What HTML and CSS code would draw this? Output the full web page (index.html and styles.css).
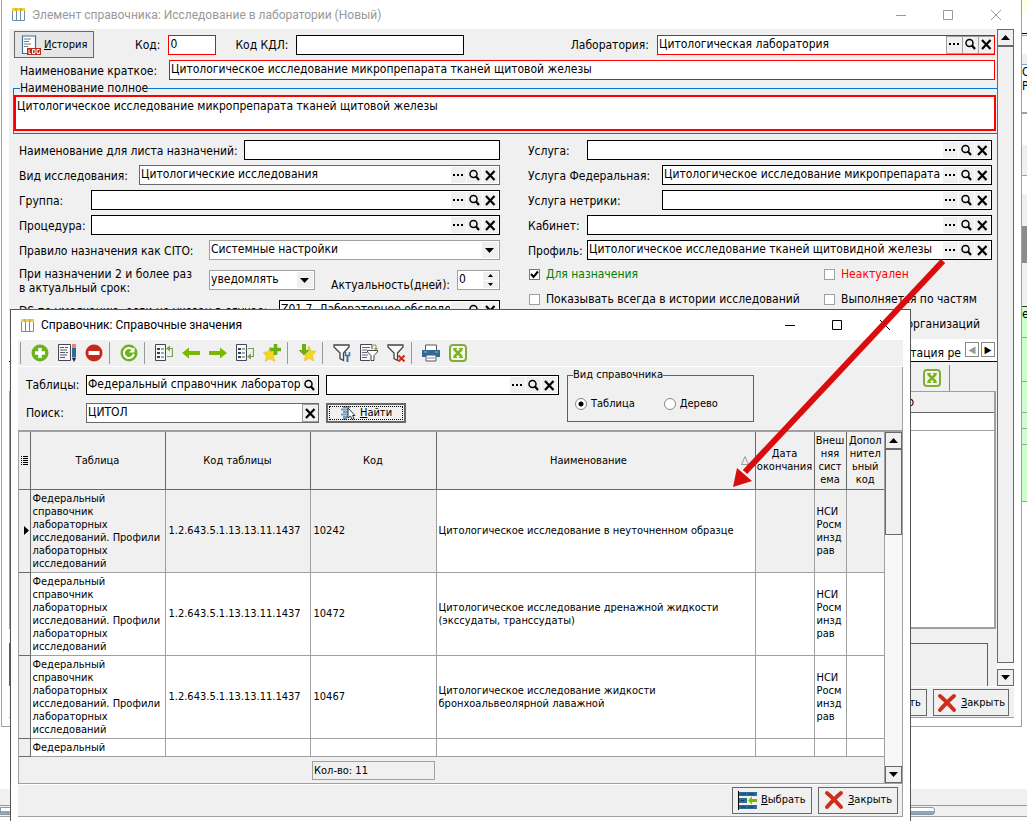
FILE: index.html
```html
<!DOCTYPE html>
<html lang="ru">
<head>
    <meta charset="UTF-8">
    <meta name="viewport" content="width=device-width, initial-scale=1.0">
    <title>Элемент справочника: Исследование в лаборатории</title>
    <link rel="stylesheet" href="styles.css">
</head>
<body>
    <!-- icon set -->
    <svg class="sprite" aria-hidden="true">
        <symbol id="i-grid" viewBox="0 0 13 13">
            <path d="M0 0h13v3H0z" fill="#f0d040"/>
            <path d="M0.5 3v9.5h12V3M4.5 3v9.5M8.5 3v9.5" fill="none" stroke="#6f8ea6"/>
            <path d="M4 0v3M9 0v3" stroke="#b5973a"/>
        </symbol>
        <symbol id="i-dots" viewBox="0 0 13 13"><path d="M1 5h2v2H1zM5 5h2v2H5zM9 5h2v2H9z"/></symbol>
        <symbol id="i-lens" viewBox="0 0 13 13"><circle cx="5.5" cy="5" r="3.5" fill="none" stroke="#000" stroke-width="1.5"/><path d="M8 7.5l3 3.5" stroke="#000" stroke-width="2.2"/></symbol>
        <symbol id="i-x" viewBox="0 0 13 13"><path d="M2 2l8.500 9M10.500 2L2 11" stroke="#000" stroke-width="2.2"/></symbol>
        <symbol id="i-up" viewBox="0 0 9 5"><path d="M0 5L4.500 0L9 5z"/></symbol>
        <symbol id="i-down" viewBox="0 0 9 5"><path d="M0 0L4.500 5L9 0z"/></symbol>
        <symbol id="i-log" viewBox="0 0 20 20">
            <path d="M1.500 1H14.500V18.500H1.500z" fill="#fff" stroke="#3a719c" stroke-width="1.2"/>
            <path d="M3 4h7M3 6.500h5M3 9h7M3 11.500h4" stroke="#777"/>
            <path d="M6 13h14v7H6z" fill="#b5301c"/>
            <path d="M8 14.500v4h2M11.500 14.500h2.500v4h-2.500zM18.500 14.500h-2.500v4h2.500v-2" fill="none" stroke="#fff"/>
        </symbol>
        <symbol id="i-close" viewBox="0 0 20 20"><path d="M3 3Q8 7 17 17M17 3Q11 8 3 17" fill="none" stroke="#cf2e1c" stroke-width="4" stroke-linecap="round"/></symbol>
        <symbol id="i-pick" viewBox="0 0 19 19">
            <path d="M1 1h18v4H1zM1 7h8v5H1zM1 14h18v4H1z" fill="#2e6b96"/>
            <path d="M0.500 0v19" stroke="#000"/>
            <path d="M3 3h5M10 3h6M3 9.500h3M3 16h5M10 16h6" stroke="#143c58"/>
            <path d="M10 9.500l4-4v2.500h5v3h-5v2.500z" fill="#7ab800"/>
        </symbol>
        <symbol id="i-find" viewBox="0 0 16 14">
            <path d="M3 1h7M1 3.500h8M3 6h5M1 8.500h7M3 11h5M3 13h4" stroke="#6f9cbd" stroke-width="2"/>
            <path d="M8 2v10l2.500-2 1.500 3.500 2-1-1.500-3H15z" fill="#fff" stroke="#333"/>
        </symbol>
        <symbol id="i-add" viewBox="0 0 18 18"><circle cx="9" cy="9" r="8.500" fill="#6db320"/><path d="M9 4v10M4 9h10" stroke="#fff" stroke-width="3.500"/></symbol>
        <symbol id="i-edit" viewBox="0 0 18 18">
            <path d="M0.500 0.500h12v16H0.500z" fill="#f8f8f8" stroke="#445"/>
            <path d="M2 3.500h4M7 3.500h3M2 6h7M2 8.500h5M8 8.500h2M2 11h7M2 13.500h5" stroke="#556"/>
            <path d="M14 0h4v3h-4z" fill="#e8837c"/><path d="M14 3.500h4v10h-4z" fill="#2e6b96"/><path d="M14 14h4l-2 4z" fill="#222"/>
        </symbol>
        <symbol id="i-remove" viewBox="0 0 18 18"><circle cx="9" cy="9" r="8.500" fill="#c8281c"/><path d="M3.500 9h11" stroke="#fff" stroke-width="4"/></symbol>
        <symbol id="i-refresh" viewBox="0 0 18 18"><circle cx="9" cy="9" r="8.500" fill="#6db320"/><path d="M12.500 5.500A5 5 0 1 0 13.800 10" fill="none" stroke="#fff" stroke-width="2"/><path d="M14.500 3v5.500H9z" fill="#fff"/></symbol>
        <symbol id="i-tree-up" viewBox="0 0 18 18">
            <path d="M0.500 0.500h10v16H0.500z" fill="#f8f8f8" stroke="#445"/>
            <path d="M2 4h3v2H2zM2 8h3v2H2zM2 12h3v2H2z" fill="#345"/><path d="M6 5h3M6 9h3M6 13h3" stroke="#556"/>
            <path d="M12 12.500h5.500v-8H14" fill="none" stroke="#7aa050" stroke-width="1.200"/><path d="M15 1.500v6l-4-3z" fill="#7aa050"/>
        </symbol>
        <symbol id="i-tree-down" viewBox="0 0 18 18">
            <path d="M0.500 0.500h10v16H0.500z" fill="#f8f8f8" stroke="#445"/>
            <path d="M2 4h3v2H2zM2 8h3v2H2zM2 12h3v2H2z" fill="#345"/><path d="M6 5h3M6 9h3M6 13h3" stroke="#556"/>
            <path d="M12 4.500h5.500v8H14" fill="none" stroke="#7aa050" stroke-width="1.200"/><path d="M15 9.500v6l-4-3z" fill="#7aa050"/>
        </symbol>
        <symbol id="i-left" viewBox="0 0 18 18"><path d="M0 9l7-5.500V7h11v4H7v3.500z" fill="#7ab800"/></symbol>
        <symbol id="i-right" viewBox="0 0 18 18"><path d="M18 9l-7-5.500V7H0v4h11v3.500z" fill="#7ab800"/></symbol>
        <symbol id="i-star-add" viewBox="0 0 18 18"><path d="M7 3l2.200 4.800 5.300.6-3.900 3.600 1 5.500L7 14.800 2.300 17.500l1-5.500L0 8.400l4.800-.6z" fill="#f6d327" stroke="#eebb2a" stroke-width=".6"/><path d="M12.500 0v11M7 5.500h11" stroke="#6fae12" stroke-width="3.600"/></symbol>
        <symbol id="i-star-down" viewBox="0 0 18 18"><path d="M11 2l2.200 4.800 4.800.6-3.500 3.600 1 6L11 14.300 6.300 17l1-5.500L3.500 7.400l5.300-.6z" fill="#f6d327" stroke="#eebb2a" stroke-width=".6"/><path d="M4 0h4v6h3.500L6 11.500.5 6H4z" fill="#6fae12"/></symbol>
        <symbol id="i-filter" viewBox="0 0 18 18"><path d="M1 1h15v2l-5.500 6v7.500L7 14.500V9L1 3z" fill="#f8f8f8" stroke="#444" stroke-width="1.300"/><path d="M14.500 11v7" stroke="#3a719c" stroke-width="2"/><path d="M12.500 8v3.500h4V8" fill="none" stroke="#3a719c" stroke-width="1.500"/></symbol>
        <symbol id="i-filter-list" viewBox="0 0 18 18"><path d="M12 5V.5H.5v16H10" fill="#f8f8f8" stroke="#445"/><path d="M2 3.500h8M2 6h5M2 8.500h5M2 11h6M2 13.500h5" stroke="#667"/><path d="M7.500 6.500h10v1.500L14 11.500v5h-3v-5L7.500 8z" fill="#fff" stroke="#444"/><path d="M13 1h3v4" fill="none" stroke="#7aa050"/><path d="M14 4h4l-2 2.500z" fill="#7aa050"/></symbol>
        <symbol id="i-filter-off" viewBox="0 0 18 18"><path d="M1 1h15v2l-5.500 6v7.500L7 14.500V9L1 3z" fill="#f8f8f8" stroke="#444" stroke-width="1.300"/><path d="M11.500 11.500l6 6M17.500 11.500l-6 6" stroke="#cf2e1c" stroke-width="2"/></symbol>
        <symbol id="i-print" viewBox="0 0 18 18"><path d="M3.500 1h11v6h-11z" fill="#fff" stroke="#556"/><path d="M0 6h18v7H0z" fill="#2e6b96"/><path d="M2 8h3M13 8h3" stroke="#8ab8d8"/><path d="M4 11h10v6H4z" fill="#fff" stroke="#556"/><path d="M5 14h8" stroke="#889"/></symbol>
        <symbol id="i-excel" viewBox="0 0 18 18"><rect x="1" y="1" width="16" height="16" rx="3" fill="#f4f8ea" stroke="#86ab3c" stroke-width="2"/><path d="M5 5l8 8M13 5l-8 8" stroke="#7ab51d" stroke-width="2.500"/><path d="M4 4.500h4M10 4.500h4M4 13.500h4M10 13.500h4" stroke="#86ab3c"/></symbol>
    </svg>

    <div class="desktop">
        <!-- application behind the dialogs -->
        <div class="backdrop">
            <div class="edge">
                <div class="edge-top"></div>
                <div class="edge-cell"></div>
                <div class="edge-bar"></div>
                <div class="edge-text">О<br>Р</div>
                <div class="edge-gap"></div>
                <div class="edge-scroll"></div>
                <div class="edge-thumb"></div>
                <div class="edge-scroll short"></div>
                <div class="edge-green">е</div>
                <div class="edge-green tall"></div>
                <div class="edge-green"></div>
                <div class="edge-green thin"></div>
                <div class="edge-green thin"></div>
                <div class="edge-green high"></div>
            </div>
            <div class="hscroll"><div class="hthumb"></div></div>
        </div>

        <section class="window window-main">
            <header class="titlebar">
                <svg class="ico-title"><use href="#i-grid"/></svg>
                <h1>Элемент справочника: Исследование в лаборатории (Новый)</h1>
                <svg class="caption" viewBox="0 0 106 12"><path d="M0 6.500h10M47.500 1.500h9v9h-9zM95 1l10 10M105 1l-10 10" fill="none" stroke="#999"/></svg>
            </header>
            <div class="client">
                <div class="scroll-area">
                    <form class="card">
                        <div class="row row-top">
                            <button type="button" class="btn btn-log"><svg class="ico20"><use href="#i-log"/></svg><span><u>И</u>стория</span></button>
                            <label for="code">Код:</label>
                            <input id="code" class="field red f-code" type="text" value="0">
                            <label for="kdl">Код КДЛ:</label>
                            <input id="kdl" class="field f-kdl" type="text">
                            <label for="lab" class="push">Лаборатория:</label>
                            <div class="lookup red boxed f-lab">
                                <input id="lab" type="text" value="Цитологическая лаборатория">
                                <button type="button" aria-label="Выбрать"><svg><use href="#i-dots"/></svg></button>
                                <button type="button" aria-label="Найти"><svg><use href="#i-lens"/></svg></button>
                                <button type="button" aria-label="Очистить"><svg><use href="#i-x"/></svg></button>
                            </div>
                        </div>
                        <div class="row row-short">
                            <label for="short">Наименование краткое:</label>
                            <input id="short" class="field red grow" type="text" value="Цитологическое исследование микропрепарата тканей щитовой железы">
                        </div>
                        <fieldset class="full-name">
                            <legend><label for="full">Наименование полное</label></legend>
                            <textarea id="full">Цитологическое исследование микропрепарата тканей щитовой железы</textarea>
                        </fieldset>

                        <div class="columns">
                            <div class="col">
                                <div class="row">
                                    <label for="sheet" class="l-225">Наименование для листа назначений:</label>
                                    <input id="sheet" class="field grow" type="text">
                                </div>
                                <div class="row">
                                    <label for="kind" class="l-120">Вид исследования:</label>
                                    <div class="lookup gray">
                                        <input id="kind" type="text" value="Цитологические исследования">
                                        <button type="button" aria-label="Выбрать"><svg><use href="#i-dots"/></svg></button>
                                        <button type="button" aria-label="Найти"><svg><use href="#i-lens"/></svg></button>
                                        <button type="button" aria-label="Очистить"><svg><use href="#i-x"/></svg></button>
                                    </div>
                                </div>
                                <div class="row">
                                    <label for="group" class="l-72">Группа:</label>
                                    <div class="lookup">
                                        <input id="group" type="text">
                                        <button type="button" aria-label="Выбрать"><svg><use href="#i-dots"/></svg></button>
                                        <button type="button" aria-label="Найти"><svg><use href="#i-lens"/></svg></button>
                                        <button type="button" aria-label="Очистить"><svg><use href="#i-x"/></svg></button>
                                    </div>
                                </div>
                                <div class="row">
                                    <label for="proc" class="l-72">Процедура:</label>
                                    <div class="lookup">
                                        <input id="proc" type="text">
                                        <button type="button" aria-label="Выбрать"><svg><use href="#i-dots"/></svg></button>
                                        <button type="button" aria-label="Найти"><svg><use href="#i-lens"/></svg></button>
                                        <button type="button" aria-label="Очистить"><svg><use href="#i-x"/></svg></button>
                                    </div>
                                </div>
                                <div class="row">
                                    <label for="cito" class="l-190">Правило назначения как CITO:</label>
                                    <select id="cito" class="select grow"><option>Системные настройки</option></select>
                                </div>
                                <div class="row row-tall">
                                    <label for="notify" class="l-190">При назначении 2 и более раз<br>в актуальный срок:</label>
                                    <select id="notify" class="select f-notify"><option>уведомлять</option></select>
                                    <label for="days" class="push">Актуальность(дней):</label>
                                    <div class="spin">
                                        <input id="days" type="text" value="0">
                                        <div class="spin-btns">
                                            <button type="button" aria-label="Больше"><svg><use href="#i-up"/></svg></button>
                                            <button type="button" aria-label="Меньше"><svg><use href="#i-down"/></svg></button>
                                        </div>
                                    </div>
                                </div>
                                <div class="row">
                                    <label for="ds" class="l-260">DS по умолчанию, если не указан в случае:</label>
                                    <div class="lookup">
                                        <input id="ds" type="text" value="Z01.7, Лабораторное обследование">
                                        <button type="button" aria-label="Выбрать"></button>
                                        <button type="button" aria-label="Найти"><svg><use href="#i-lens"/></svg></button>
                                        <button type="button" aria-label="Очистить"><svg><use href="#i-x"/></svg></button>
                                    </div>
                                </div>
                            </div>
                            <div class="col">
                                <div class="row">
                                    <label for="service" class="l-59">Услуга:</label>
                                    <div class="lookup">
                                        <input id="service" type="text">
                                        <button type="button" aria-label="Выбрать"><svg><use href="#i-dots"/></svg></button>
                                        <button type="button" aria-label="Найти"><svg><use href="#i-lens"/></svg></button>
                                        <button type="button" aria-label="Очистить"><svg><use href="#i-x"/></svg></button>
                                    </div>
                                </div>
                                <div class="row">
                                    <label for="fed" class="l-134">Услуга Федеральная:</label>
                                    <div class="lookup">
                                        <input id="fed" type="text" value="Цитологическое исследование микропрепарата тканей">
                                        <button type="button" aria-label="Выбрать"><svg><use href="#i-dots"/></svg></button>
                                        <button type="button" aria-label="Найти"><svg><use href="#i-lens"/></svg></button>
                                        <button type="button" aria-label="Очистить"><svg><use href="#i-x"/></svg></button>
                                    </div>
                                </div>
                                <div class="row">
                                    <label for="netrika" class="l-134">Услуга нетрики:</label>
                                    <div class="lookup">
                                        <input id="netrika" type="text">
                                        <button type="button" aria-label="Выбрать"><svg><use href="#i-dots"/></svg></button>
                                        <button type="button" aria-label="Найти"><svg><use href="#i-lens"/></svg></button>
                                        <button type="button" aria-label="Очистить"><svg><use href="#i-x"/></svg></button>
                                    </div>
                                </div>
                                <div class="row">
                                    <label for="room" class="l-59">Кабинет:</label>
                                    <div class="lookup">
                                        <input id="room" type="text">
                                        <button type="button" aria-label="Выбрать"><svg><use href="#i-dots"/></svg></button>
                                        <button type="button" aria-label="Найти"><svg><use href="#i-lens"/></svg></button>
                                        <button type="button" aria-label="Очистить"><svg><use href="#i-x"/></svg></button>
                                    </div>
                                </div>
                                <div class="row">
                                    <label for="profile" class="l-59">Профиль:</label>
                                    <div class="lookup">
                                        <input id="profile" type="text" value="Цитологическое исследование тканей щитовидной железы">
                                        <button type="button" aria-label="Выбрать"><svg><use href="#i-dots"/></svg></button>
                                        <button type="button" aria-label="Найти"><svg><use href="#i-lens"/></svg></button>
                                        <button type="button" aria-label="Очистить"><svg><use href="#i-x"/></svg></button>
                                    </div>
                                </div>
                                <div class="checks">
                                    <label class="check green"><input type="checkbox" checked>Для назначения</label>
                                    <label class="check redtext"><input type="checkbox">Неактуален</label>
                                    <label class="check"><input type="checkbox">Показывать всегда в истории исследований</label>
                                    <label class="check"><input type="checkbox">Выполняется по частям</label>
                                    <span class="org">организаций</span>
                                </div>
                            </div>
                        </div>

                        <div class="tabs">
                            <span class="tab">тация ре</span>
                            <button type="button" class="tab-nav off" aria-label="Назад">◀</button>
                            <button type="button" class="tab-nav" aria-label="Вперёд">▶</button>
                        </div>
                        <div class="sub-toolbar"><svg class="ico18"><use href="#i-excel"/></svg></div>
                        <div class="sub-grid">
                            <div class="sub-head">о</div>
                            <div class="sub-row"></div>
                        </div>
                        <div class="sub-group"></div>
                    </form>
                    <div class="vscroll">
                        <button type="button" class="sb-btn" aria-label="Вверх"><svg><use href="#i-up"/></svg></button>
                        <div class="sb-thumb main-thumb"></div>
                        <button type="button" class="sb-btn" aria-label="Вниз"><svg><use href="#i-down"/></svg></button>
                    </div>
                </div>
                <footer class="actions">
                    <button type="button" class="btn btn-save">Сохранить</button>
                    <button type="button" class="btn"><svg class="ico20"><use href="#i-close"/></svg><span><u>З</u>акрыть</span></button>
                </footer>
            </div>
        </section>

        <section class="window window-ref">
            <header class="titlebar active">
                <svg class="ico-title"><use href="#i-grid"/></svg>
                <h2>Справочник: Справочные значения</h2>
                <svg class="caption" viewBox="0 0 106 12"><path d="M0 6.500h10M47.500 1.500h9v9h-9zM95 1l10 10M105 1l-10 10" fill="none" stroke="#000"/></svg>
            </header>
            <div class="toolbar">
                <i class="sep"></i>
                <button type="button" aria-label="Добавить"><svg class="ico18"><use href="#i-add"/></svg></button>
                <button type="button" aria-label="Изменить"><svg class="ico18"><use href="#i-edit"/></svg></button>
                <button type="button" aria-label="Удалить"><svg class="ico18"><use href="#i-remove"/></svg></button>
                <i class="sep"></i>
                <button type="button" aria-label="Обновить"><svg class="ico18"><use href="#i-refresh"/></svg></button>
                <i class="sep"></i>
                <button type="button" aria-label="Первая"><svg class="ico18"><use href="#i-tree-up"/></svg></button>
                <button type="button" aria-label="Назад"><svg class="ico18"><use href="#i-left"/></svg></button>
                <button type="button" aria-label="Вперёд"><svg class="ico18"><use href="#i-right"/></svg></button>
                <button type="button" aria-label="Последняя"><svg class="ico18"><use href="#i-tree-down"/></svg></button>
                <button type="button" aria-label="В избранное"><svg class="ico18"><use href="#i-star-add"/></svg></button>
                <i class="sep"></i>
                <button type="button" aria-label="Избранное"><svg class="ico18"><use href="#i-star-down"/></svg></button>
                <i class="sep"></i>
                <button type="button" aria-label="Фильтр"><svg class="ico18"><use href="#i-filter"/></svg></button>
                <button type="button" aria-label="Список фильтров"><svg class="ico18"><use href="#i-filter-list"/></svg></button>
                <button type="button" aria-label="Снять фильтр"><svg class="ico18"><use href="#i-filter-off"/></svg></button>
                <i class="sep"></i>
                <button type="button" aria-label="Печать"><svg class="ico18"><use href="#i-print"/></svg></button>
                <button type="button" aria-label="Excel"><svg class="ico18"><use href="#i-excel"/></svg></button>
            </div>

            <div class="panel">
                <div class="search">
                    <div class="search-fields">
                        <label for="tables">Таблицы:</label>
                        <div class="lookup">
                            <input id="tables" type="text" value="Федеральный справочник лабораторных">
                            <button type="button" aria-label="Найти"><svg><use href="#i-lens"/></svg></button>
                        </div>
                        <div class="lookup">
                            <input type="text" aria-label="Значение">
                            <button type="button" aria-label="Выбрать"><svg><use href="#i-dots"/></svg></button>
                            <button type="button" aria-label="Найти"><svg><use href="#i-lens"/></svg></button>
                            <button type="button" aria-label="Очистить"><svg><use href="#i-x"/></svg></button>
                        </div>
                        <label for="query">Поиск:</label>
                        <div class="lookup gray boxed">
                            <input id="query" type="text" value="ЦИТОЛ">
                            <button type="button" aria-label="Очистить"><svg><use href="#i-x"/></svg></button>
                        </div>
                        <button type="button" class="btn btn-find"><svg class="ico-find"><use href="#i-find"/></svg><span><u>Н</u>айти</span></button>
                    </div>
                    <fieldset class="view">
                        <legend>Вид справочника</legend>
                        <label class="radio"><input type="radio" name="view" checked>Таблица</label>
                        <label class="radio"><input type="radio" name="view">Дерево</label>
                    </fieldset>
                </div>

                <div class="grid-box">
                    <div class="grid-main">
                        <div class="grid-view">
                            <table class="grid">
                                <colgroup><col class="c-mark"><col class="c-table"><col class="c-oid"><col class="c-code"><col><col class="c-date"><col class="c-ext"><col class="c-add"></colgroup>
                                <thead>
                                    <tr>
                                        <th><svg class="ico-list" viewBox="0 0 7 9"><path d="M0 .5h1M2 .5h5M0 2.500h1M2 2.500h5M0 4.500h1M2 4.500h5M0 6.500h1M2 6.500h5M0 8.500h1M2 8.500h5" stroke="#000"/></svg></th>
                                        <th>Таблица</th>
                                        <th>Код таблицы</th>
                                        <th>Код</th>
                                        <th><div class="sorted"><span>Наименование</span><svg class="ico-sort" viewBox="0 0 8 9"><path d="M4 .5L7.500 8.500H.5z" fill="none" stroke="#999"/></svg></div></th>
                                        <th>Дата<br>окончания</th>
                                        <th>Внеш<br>няя<br>сист<br>ема</th>
                                        <th>Допол<br>нител<br>ьный<br>код</th>
                                    </tr>
                                </thead>
                                <tbody>
                                    <tr class="current">
                                        <td><svg class="ico-mark" viewBox="0 0 5 9"><path d="M0 0l5 4.500L0 9z"/></svg></td>
                                        <td>Федеральный<br>справочник<br>лабораторных<br>исследований. Профили<br>лабораторных<br>исследований</td>
                                        <td>1.2.643.5.1.13.13.11.1437</td>
                                        <td>10242</td>
                                        <td class="name">Цитологическое исследование в неуточненном образце</td>
                                        <td></td>
                                        <td>НСИ<br>Росм<br>инзд<br>рав</td>
                                        <td></td>
                                    </tr>
                                    <tr>
                                        <td></td>
                                        <td>Федеральный<br>справочник<br>лабораторных<br>исследований. Профили<br>лабораторных<br>исследований</td>
                                        <td>1.2.643.5.1.13.13.11.1437</td>
                                        <td>10472</td>
                                        <td>Цитологическое исследование дренажной жидкости<br>(экссудаты, транссудаты)</td>
                                        <td></td>
                                        <td>НСИ<br>Росм<br>инзд<br>рав</td>
                                        <td></td>
                                    </tr>
                                    <tr>
                                        <td></td>
                                        <td>Федеральный<br>справочник<br>лабораторных<br>исследований. Профили<br>лабораторных<br>исследований</td>
                                        <td>1.2.643.5.1.13.13.11.1437</td>
                                        <td>10467</td>
                                        <td>Цитологическое исследование жидкости<br>бронхоальвеолярной лаважной</td>
                                        <td></td>
                                        <td>НСИ<br>Росм<br>инзд<br>рав</td>
                                        <td></td>
                                    </tr>
                                    <tr class="last">
                                        <td></td>
                                        <td>Федеральный</td>
                                        <td></td>
                                        <td></td>
                                        <td></td>
                                        <td></td>
                                        <td></td>
                                        <td></td>
                                    </tr>
                                </tbody>
                            </table>
                        </div>
                        <div class="grid-foot"><span class="count">Кол-во: 11</span></div>
                    </div>
                    <div class="vscroll">
                        <button type="button" class="sb-btn" aria-label="Вверх"><svg><use href="#i-up"/></svg></button>
                        <div class="sb-thumb"></div>
                        <div class="sb-space"></div>
                        <button type="button" class="sb-btn" aria-label="Вниз"><svg><use href="#i-down"/></svg></button>
                    </div>
                </div>
                <footer class="actions">
                    <button type="button" class="btn btn-wide"><svg class="ico-pick"><use href="#i-pick"/></svg><span><u>В</u>ыбрать</span></button>
                    <button type="button" class="btn btn-wide"><svg class="ico20"><use href="#i-close"/></svg><span><u>З</u>акрыть</span></button>
                </footer>
            </div>
        </section>

        <svg class="pointer" viewBox="0 0 216 230" aria-hidden="true">
            <path d="M211 3L13 214" stroke="#d90d0d" stroke-width="6"/>
            <path d="M1 229L5 210L20 223z" fill="#d90d0d"/>
        </svg>
    </div>
</body>
</html>
```
FILE: styles.css
```css
:root {
    --face: #f0f0f0;
    --line: #a0a0a0;
    --dark: #696969;
    --blue: #0078d7;
    --red: #ff0000;
}

* {
    box-sizing: border-box;
}

body {
    margin: 0;
    font-family: "DejaVu Sans Condensed", "DejaVu Sans", sans-serif;
    font-size: 12px;
    line-height: 14px;
    color: #000;
    background: #fff;
}

input, select, textarea, button {
    font: inherit;
    color: inherit;
    margin: 0;
    padding: 0;
    border: 0;
    border-radius: 0;
}

.sprite {
    display: none;
}

svg {
    flex: none;
    display: block;
}

.desktop {
    position: relative;
    height: 100vh;
    overflow: hidden;
}

/* application behind */
.backdrop {
    height: 100%;
    display: flex;
    flex-direction: column;
}

.edge {
    flex: 1;
    width: 5px;
    margin-left: auto;
    overflow: hidden;
}

.edge-top {
    height: 12px;
    background: #ffffe1;
}

.edge-cell {
    height: 22px;
    border-bottom: 1px solid #000;
}

.edge-bar {
    height: 30px;
    margin-top: 1px;
    border-top: 1px solid var(--line);
    border-bottom: 1px solid #7da2c0;
    background: linear-gradient(#fff 18px, var(--face) 18px);
}

.edge-text {
    height: 49px;
    border-bottom: 2px solid var(--line);
}

.edge-gap {
    height: 62px;
    background: linear-gradient(#fff 31px, var(--face) 31px);
    border-bottom: 1px solid var(--line);
}

.edge-scroll {
    height: 50px;
    background: linear-gradient(#fff 18px, var(--face) 18px);
}

.edge-scroll.short {
    height: 44px;
    background: var(--face);
    border-bottom: 1px solid #333;
}

.edge-thumb {
    height: 37px;
    background: #8c8c8c;
}

.edge-green {
    height: 31px;
    background: #ccffcc;
    border-bottom: 1px solid var(--line);
}

.edge-green.tall { height: 44px; }
.edge-green.thin { height: 16px; }
.edge-green.high { height: 57px; }

.hscroll {
    height: 32px;
    padding-top: 18px;
    background: linear-gradient(var(--face) 16px, #7da2c0 16px, #7da2c0 17px, var(--face) 17px, var(--face) 27px, var(--line) 27px, var(--line) 28px, #fff 28px);
}

.hthumb {
    width: 91%;
    height: 8px;
    border: 1px solid #8c9aa5;
    background: linear-gradient(#fff 3px, #8ba8bd 3px);
    border-radius: 0 3px 3px 0;
}

/* windows */
.window {
    position: absolute;
    background: #fff;
    border: 1px solid var(--line);
}

.window-main {
    top: 0;
    left: 1px;
    right: 5px;
    bottom: 94px;
    border-top: 0;
    padding: 0 7px 8px;
    display: flex;
    flex-direction: column;
}

.window-ref {
    top: 309px;
    left: 10px;
    right: 116px;
    bottom: -5px;
    border-color: #555;
    padding: 0 7px 8px;
    display: flex;
    flex-direction: column;
}

.titlebar {
    flex: none;
    display: flex;
    align-items: center;
    height: 29px;
    padding: 0 12px 0 3px;
    gap: 7px;
    color: #999;
}

.titlebar.active {
    height: 30px;
    color: #000;
}

.titlebar h1,
.titlebar h2 {
    margin: 0;
    font-family: Roboto, "Open Sans", sans-serif;
    font-size: 12px;
    font-weight: 400;
}

.ico-title {
    width: 13px;
    height: 13px;
}

.caption {
    width: 106px;
    height: 12px;
    margin-left: auto;
}

.client {
    flex: 1;
    min-height: 0;
    display: flex;
    flex-direction: column;
    background: var(--face);
    border-bottom: 1px solid var(--line);
}

.scroll-area {
    flex: 1;
    min-height: 0;
    display: flex;
}

.card {
    flex: 1;
    min-width: 0;
    display: flex;
    flex-direction: column;
    overflow: hidden;
}

/* form rows */
.row {
    display: flex;
    align-items: center;
    height: 20px;
}

.row label {
    padding-top: 2px;
    white-space: nowrap;
}

.row-top {
    height: 30px;
    padding: 1px 2px 0 5px;
}

.row-top label {
    padding-top: 0;
    padding-right: 8px;
}

.row-short {
    padding: 0 2px 0 11px;
    margin: 1px 0 0;
}

.row-short label {
    width: 149px;
}

.push {
    margin-left: auto;
}

.grow {
    flex: 1;
    min-width: 0;
}

.field,
.lookup,
.select,
.spin {
    height: 20px;
    background: #fff;
    border: 1px solid #000;
}

.field {
    padding: 0 1px 2px;
}

.red { border-color: var(--red); }
.gray { border-color: var(--dark); }

.btn {
    display: flex;
    align-items: center;
    gap: 4px;
    height: 27px;
    padding: 0 3px;
    font-size: 11px;
    background: var(--face);
    border: 1px solid var(--dark);
    white-space: nowrap;
}

.btn-wide {
    width: 80px;
    padding: 0 5px;
}

.btn-log {
    width: 80px;
    padding: 0 6px;
    gap: 3px;
    background: #e6e6e6;
    margin-right: 41px;
}

.f-code {
    width: 48px;
    margin-right: 19px;
}

.f-kdl {
    width: 168px;
}

.lookup {
    flex: 1;
    min-width: 0;
    display: flex;
    gap: 1px;
    padding: 1px;
}

.lookup.f-lab {
    flex: 0 0 338px;
}

.lookup input {
    flex: 1;
    min-width: 0;
    width: 0;
    padding-bottom: 2px;
    outline: 0;
}

.lookup button {
    width: 15px;
    display: grid;
    place-items: center;
    background: var(--face);
}

.lookup svg {
    width: 13px;
    height: 13px;
}

.lookup.boxed {
    gap: 0;
    padding: 0;
}

.lookup.boxed input {
    padding-left: 1px;
}

.lookup.boxed button {
    width: 16px;
    border: 1px solid var(--line);
    border-right-width: 0;
}

fieldset {
    margin: 0;
    padding: 0;
    min-width: 0;
    border: 1px solid var(--blue);
}

legend {
    padding: 0;
}

.full-name {
    margin: 1px 0 6px 4px;
    border-right: 0;
}

.full-name legend {
    margin-left: 6px;
}

.full-name textarea {
    display: block;
    width: calc(100% - 1px);
    height: 36px;
    margin-bottom: 2px;
    padding: 2px 1px;
    border: 2px solid var(--red);
    resize: none;
    overflow: hidden;
}

.columns {
    display: grid;
    grid-template-columns: 481px 1fr;
    column-gap: 28px;
    height: 199px;
    flex: none;
    padding: 0 5px 0 10px;
}

.col {
    display: flex;
    flex-direction: column;
    gap: 5px;
    min-width: 0;
}

.l-59 { width: 59px; }
.l-72 { width: 72px; }
.l-120 { width: 120px; }
.l-134 { width: 134px; }
.l-190 { width: 190px; }
.l-225 { width: 225px; }
.l-260 { width: 260px; }

.select {
    appearance: none;
    padding: 0 18px 2px 1px;
    border-color: var(--line);
    background: #fff url("data:image/svg+xml,%3Csvg xmlns='http://www.w3.org/2000/svg' width='16' height='16'%3E%3Cpath fill='%23f0f0f0' d='M0 0h16v16H0z'/%3E%3Cpath d='M3 6h9l-4.500 5z'/%3E%3C/svg%3E") no-repeat right 1px center;
}

.f-notify {
    width: 106px;
}

.row-tall {
    height: 30px;
}

.row-tall .push {
    padding-top: 9px;
    padding-right: 7px;
}

.spin {
    display: flex;
    width: 43px;
    padding: 1px;
    border-color: var(--line);
}

.spin input {
    flex: 1;
    width: 0;
    padding-bottom: 2px;
}

.spin-btns {
    display: grid;
    gap: 1px;
    width: 15px;
}

.spin-btns button {
    display: grid;
    place-items: center;
    background: var(--face);
}

.spin-btns svg {
    width: 5px;
    height: 3px;
}

.checks {
    display: grid;
    grid-template-columns: 295px 1fr;
    row-gap: 11px;
    padding-top: 2px;
}

.check {
    display: flex;
    align-items: center;
    gap: 6px;
    white-space: nowrap;
}

.check input {
    appearance: none;
    flex: none;
    width: 11px;
    height: 11px;
    margin-left: 1px;
    border: 1px solid var(--line);
    background: #fff;
}

.check input:checked {
    border-color: #777;
    background: #fff url("data:image/svg+xml,%3Csvg xmlns='http://www.w3.org/2000/svg' width='9' height='9'%3E%3Cpath d='M1 4l2.500 3L8 1.500' fill='none' stroke='%23000' stroke-width='2'/%3E%3C/svg%3E") center no-repeat;
}

.green { color: #008000; }
.redtext { color: var(--red); }

.org {
    grid-column: 2;
    text-align: right;
    padding-right: 12px;
}

/* lower tabs, mostly under the second window */
.tabs {
    display: flex;
    flex: none;
    justify-content: flex-end;
    gap: 2px;
    height: 23px;
    padding: 3px 2px 0;
    background: #fff;
    border-bottom: 1px solid #000;
}

.tab {
    padding: 4px 2px 0 0;
}

.tab-nav {
    width: 14px;
    height: 15px;
    font-size: 10px;
    line-height: 10px;
    background: #fff;
    border: 1px solid #888;
}

.tab-nav.off {
    color: #999;
}

.sub-toolbar {
    display: flex;
    flex: none;
    align-items: center;
    justify-content: flex-end;
    height: 26px;
    margin: 3px 47px 0 0;
    padding-right: 8px;
    border-right: 1px solid #888;
}

.sub-grid {
    flex: none;
    height: 238px;
    margin-right: 1px;
    background: #fff;
    border: 2px solid var(--line);
    border-top-width: 1px;
}

.sub-head {
    height: 21px;
    padding: 3px 80px 0 0;
    text-align: right;
    background: var(--face);
    border-bottom: 1px solid var(--dark);
}

.sub-row {
    height: 18px;
    border-bottom: 1px solid var(--line);
}

.sub-group {
    flex: 1;
    margin: 14px 9px 0 0;
    border: 1px solid var(--blue);
    border-bottom: 0;
}

/* scroll bars */
.vscroll {
    flex: none;
    width: 17px;
    display: flex;
    flex-direction: column;
    background: #f8f8f8;
}

.sb-btn {
    flex: none;
    display: grid;
    place-items: center;
    height: 17px;
    background: var(--face);
    border: 1px solid var(--dark);
}

.sb-btn svg {
    width: 9px;
    height: 5px;
}

.sb-thumb {
    flex: none;
    height: 86px;
    background: var(--face);
    border: 1px solid var(--dark);
}

.main-thumb {
    flex: 1;
    margin-bottom: 6px;
}

.sb-space {
    flex: 1;
}

.actions {
    display: flex;
    flex: none;
    justify-content: flex-end;
    gap: 6px;
    padding: 2px 5px 1px;
    border-top: 1px solid #fff;
}

.ico20 {
    width: 20px;
    height: 20px;
}

.ico18 {
    width: 18px;
    height: 18px;
}

.ico-pick {
    width: 19px;
    height: 19px;
}

.btn-save {
    padding: 0 5px;
}

/* toolbar */
.toolbar {
    display: flex;
    flex: none;
    align-items: center;
    height: 27px;
    background: var(--face);
    border-bottom: 1px solid #fff;
}

.toolbar button {
    display: grid;
    place-items: center;
    width: 27px;
    height: 26px;
    background: none;
}

.sep {
    width: 8px;
    height: 22px;
    background: linear-gradient(#999, #999) 2px 0 / 1px 100% no-repeat;
}

.panel {
    flex: 1;
    min-height: 0;
    display: flex;
    flex-direction: column;
    background: var(--face);
    border-right: 1px solid var(--line);
    border-bottom: 1px solid var(--line);
}

.panel .actions {
    padding-right: 4px;
}

.search {
    display: flex;
    flex: none;
    align-items: flex-start;
    height: 63px;
    padding-left: 8px;
    gap: 8px;
}

.search-fields {
    display: grid;
    grid-template-columns: 53px 233px 233px;
    column-gap: 7px;
    row-gap: 8px;
    align-items: center;
    padding-top: 8px;
}

.search-fields label {
    white-space: nowrap;
}

.btn-find {
    width: 80px;
    height: 20px;
    justify-content: center;
    border: 2px solid var(--dark);
    outline: 1px dotted #000;
    outline-offset: -4px;
}

.ico-find {
    width: 16px;
    height: 14px;
}

.view {
    display: flex;
    width: 187px;
    height: 54px;
    margin-top: 1px;
    font-size: 11px;
}

.view legend {
    margin-left: 5px;
}

.radio {
    display: flex;
    align-items: center;
    gap: 4px;
    margin: 4px 22px 0 7px;
}

.radio input {
    appearance: none;
    width: 12px;
    height: 12px;
    border: 1px solid #888;
    border-radius: 50%;
    background: #fff;
}

.radio input:checked {
    background: radial-gradient(#000 2px, #fff 3px);
}

/* data grid */
.grid-box {
    flex: none;
    display: flex;
    border: 1px solid var(--line);
    border-top-width: 2px;
    border-right: 0;
}

.grid-main {
    flex: 1;
    min-width: 0;
    border-right: 1px solid var(--line);
}

.grid-view {
    overflow: hidden;
}

.grid {
    width: 100%;
    table-layout: fixed;
    border-collapse: collapse;
    font-size: 11px;
    line-height: 13px;
    background: #fff;
}

.c-mark { width: 11px; }
.c-table { width: 135px; }
.c-oid { width: 145px; }
.c-code { width: 126px; }
.c-date { width: 59px; }
.c-ext { width: 32px; }
.c-add { width: 38px; }

.grid th,
.grid td {
    border: 1px solid var(--line);
    border-width: 0 1px 1px 0;
    padding: 0 1px 0 2px;
    white-space: nowrap;
}

.grid th:last-child,
.grid td:last-child {
    border-right: 0;
}

.grid th {
    height: 57px;
    font-weight: 400;
    background: var(--face);
    border-color: var(--dark);
    padding: 0;
}

.grid td {
    height: 83px;
}

.grid td:nth-child(3),
.grid td:nth-child(4) {
    padding-left: 3px;
}

.grid td:first-child,
.grid .current td {
    background: var(--face);
}

.grid td:first-child {
    padding: 0 1px;
    border-color: var(--dark);
}

.grid .current .name {
    background: #fff;
}

.grid .last td {
    height: 18px;
}

.sorted {
    display: flex;
    align-items: center;
    padding-right: 6px;
}

.sorted span {
    flex: 1;
}

.ico-list {
    width: 7px;
    height: 9px;
    margin: 0 auto;
}

.ico-sort {
    width: 8px;
    height: 9px;
}

.ico-mark {
    width: 5px;
    height: 9px;
    margin-left: auto;
}

.grid-foot {
    height: 26px;
    padding: 4px 0 0 293px;
    font-size: 11px;
}

.count {
    display: block;
    width: 123px;
    height: 19px;
    padding: 2px 1px;
    border: 1px solid var(--line);
}

.pointer {
    position: absolute;
    top: 258px;
    right: 79px;
    width: 216px;
    height: 230px;
    pointer-events: none;
}
```
